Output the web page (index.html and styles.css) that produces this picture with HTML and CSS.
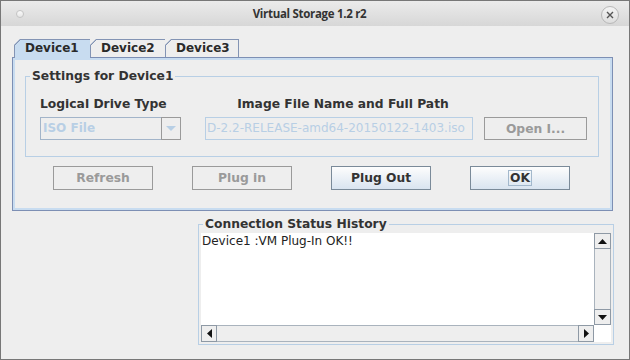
FILE: index.html
```html
<!DOCTYPE html>
<html lang="en">
<head>
    <meta charset="UTF-8">
    <title>Virtual Storage 1.2 r2</title>
    <link rel="stylesheet" href="styles.css">
</head>
<body>
    <div class="window">
        <div class="titlebar">
            <span class="dot"></span>
            <span class="title">Virtual Storage 1.2 r2</span>
            <span class="close">
                <svg width="10" height="10" viewBox="0 0 10 10"><path d="M2 2 L8 8 M8 2 L2 8" stroke="#555" stroke-width="1.4" fill="none"/></svg>
            </span>
        </div>

        <div class="content">
            <div class="tabs">
                <div class="tab selected w1">Device1</div>
                <div class="tab w2">Device2</div>
                <div class="tab last w3">Device3</div>
            </div>

            <div class="panel">
                <fieldset class="group settings">
                    <legend>Settings for Device1</legend>
                    <div class="settings-grid">
                        <div class="label col-a">Logical Drive Type</div>
                        <div class="label center col-b">Image File Name and Full Path</div>
                        <div class="combo col-a">
                            <div class="combo-value">ISO File</div>
                            <div class="combo-arrow">
                                <svg width="10" height="5" viewBox="0 0 10 5"><path d="M0 0 H10 L5 5 Z" fill="#b8cfe5"/></svg>
                            </div>
                        </div>
                        <div class="field col-b">D-2.2-RELEASE-amd64-20150122-1403.iso</div>
                        <div class="btn disabled col-c">Open I...</div>
                    </div>
                </fieldset>

                <div class="actions">
                    <div class="btn disabled">Refresh</div>
                    <div class="btn disabled">Plug in</div>
                    <div class="btn">Plug Out</div>
                    <div class="btn"><span class="focus">OK</span></div>
                </div>
            </div>

            <fieldset class="group status">
                <legend>Connection Status History</legend>
                <div class="scrollpane">
                    <div class="textarea">Device1 :VM Plug-In OK!!</div>
                    <div class="vscroll">
                        <div class="sb-btn"><svg width="9" height="5" viewBox="0 0 9 5"><path d="M4.5 0 L9 5 H0 Z" fill="#111"/></svg></div>
                        <div class="sb-track"></div>
                        <div class="sb-btn"><svg width="9" height="5" viewBox="0 0 9 5"><path d="M0 0 H9 L4.5 5 Z" fill="#111"/></svg></div>
                    </div>
                    <div class="hscroll">
                        <div class="sb-btn"><svg width="5" height="9" viewBox="0 0 5 9"><path d="M0 4.5 L5 0 V9 Z" fill="#111"/></svg></div>
                        <div class="sb-track"></div>
                        <div class="sb-btn"><svg width="5" height="9" viewBox="0 0 5 9"><path d="M5 4.5 L0 0 V9 Z" fill="#111"/></svg></div>
                    </div>
                    <div class="corner"></div>
                </div>
            </fieldset>
        </div>
    </div>
</body>
</html>
```

FILE: styles.css
```css
* {
    box-sizing: border-box;
}
body {
    margin: 0;
    background: #eeeeee;
    font-family: "DejaVu Sans", sans-serif;
    font-size: 12px;
    color: #333;
}
.window {
    width: 630px;
    height: 360px;
    border: 1px solid #777;
    background: #eeeeee;
    overflow: hidden;
}
.titlebar {
    height: 25px;
    display: flex;
    align-items: center;
    padding: 0 10px 0 15px;
    background: linear-gradient(#ebebeb, #d7d7d7);
}
.dot {
    width: 8px;
    height: 8px;
    border-radius: 50%;
    border: 1px solid #c4c4c4;
    background: linear-gradient(#fafafa, #e6e6e6);
}
.title {
    flex: 1;
    text-align: center;
    font-family: "Open Sans", sans-serif;
    font-weight: bold;
    font-size: 11.5px;
    letter-spacing: -0.3px;
    color: #333;
    padding-right: 6px;
}
.close {
    width: 18px;
    height: 18px;
    border-radius: 50%;
    border: 1px solid #b8b8b8;
    background: linear-gradient(#f4f4f4, #dedede);
    display: flex;
    align-items: center;
    justify-content: center;
    margin-top: 2px;
}
.content {
    padding: 13px 0 0 11px;
}

/* tabs */
.tabs {
    display: flex;
    margin-left: 2px;
    height: 18px;
}
.tab {
    height: 18px;
    border: 1px solid #8394b4;
    border-right: none;
    border-bottom: none;
    padding-left: 10px;
    font-weight: bold;
    line-height: 16px;
    color: #2a2a2a;
    background: linear-gradient(135deg, #8394b4 0 5.3px, transparent 5.3px) border-box, #eeeeee;
    clip-path: polygon(6px 0, 100% 0, 100% 100%, 0 100%, 0 6px);
}
.tab.w1 { width: 76px; }
.tab.w2 { width: 75px; }
.tab.w3 { width: 74px; }
.tab.last {
    border-right: 1px solid #8394b4;
}
.tab.selected {
    position: relative;
    z-index: 1;
    height: 19px;
    margin-bottom: -1px;
    background: linear-gradient(135deg, #8394b4 0 5.3px, transparent 5.3px) border-box, #c8dcf0;
}
.panel {
    width: 601px;
    height: 154px;
    border: 1px solid #7d8fb4;
    box-shadow: inset 0 0 0 2px #c8dcf0;
    padding: 11px 0 0 12px;
}

/* titled groups */
.group {
    margin: 0;
    border: 1px solid #b8cfe5;
    min-width: 0;
}
.group legend {
    font-weight: bold;
    font-size: 12.3px;
    line-height: 14px;
    padding: 0 2px;
    margin-left: 4px;
}
.settings {
    width: 574px;
    padding: 14px 0 16px 0;
}
.settings-grid {
    margin-left: 14px;
    display: grid;
    grid-template-columns: 141px 24px 268px 11px 103px;
    row-gap: 5px;
}
.col-a { grid-column: 1; }
.col-b { grid-column: 3; }
.col-c { grid-column: 5; }
.settings-grid .label {
    font-weight: bold;
    font-size: 12.3px;
    line-height: 15px;
    white-space: nowrap;
}
.settings-grid .label.center {
    text-align: center;
    padding-left: 8px;
}
.combo {
    display: flex;
    height: 23px;
}
.combo-value {
    flex: 1;
    border: 1px solid #a2b4c9;
    border-right: none;
    color: #b8cfe5;
    font-weight: bold;
    line-height: 21px;
    padding-left: 2px;
}
.combo-arrow {
    width: 20px;
    border: 1px solid #9a9a9a;
    display: flex;
    align-items: center;
    justify-content: center;
}
.field {
    height: 23px;
    border: 1px solid #b8cfe5;
    color: #b8cfe5;
    line-height: 21px;
    padding-left: 1px;
    white-space: nowrap;
    overflow: hidden;
}

/* buttons */
.btn {
    height: 23px;
    border: 1px solid #7a8a99;
    background: linear-gradient(#fdfdfd, #d9e4f0);
    font-weight: bold;
    font-size: 12.3px;
    color: #333;
    display: flex;
    align-items: center;
    justify-content: center;
}
.btn.disabled {
    border-color: #9a9a9a;
    background: #eeeeee;
    color: #9a9a9a;
}
.actions {
    display: flex;
    gap: 39px;
    margin: 9px 0 0 28px;
}
.actions .btn {
    width: 100px;
    height: 24px;
}
.focus {
    border: 1px solid #a3b8cc;
    line-height: 14px;
    padding: 0 1px;
}

/* connection history */
.status {
    width: 416px;
    margin: 6px 0 0 186px;
    padding: 2px 0;
}
.scrollpane {
    margin: 0 2px;
    height: 109px;
    display: grid;
    grid-template-columns: 1fr 17px;
    grid-template-rows: 92px 17px;
}
.textarea {
    background: #fff;
    padding: 1px 0 0 1px;
    line-height: 15px;
    color: #222;
}
.vscroll {
    display: flex;
    flex-direction: column;
    background: #fff;
}
.hscroll {
    display: flex;
    background: #fff;
}
.vscroll .sb-btn,
.hscroll .sb-btn {
    width: 17px;
    height: 17px;
    flex: none;
    border: 1px solid #8e99a5;
    background: #eeeeee;
    display: flex;
    align-items: center;
    justify-content: center;
}
.vscroll .sb-btn { height: 16px; }
.hscroll .sb-btn { width: 16px; }
.sb-track {
    flex: 1;
    background: #eeeeee;
    border: 1px solid #a9b3bd;
}
.vscroll .sb-track {
    border-top: none;
    border-bottom: none;
}
.hscroll .sb-track {
    border-left: none;
    border-right: none;
}
.corner {
    background: #fff;
}
```
